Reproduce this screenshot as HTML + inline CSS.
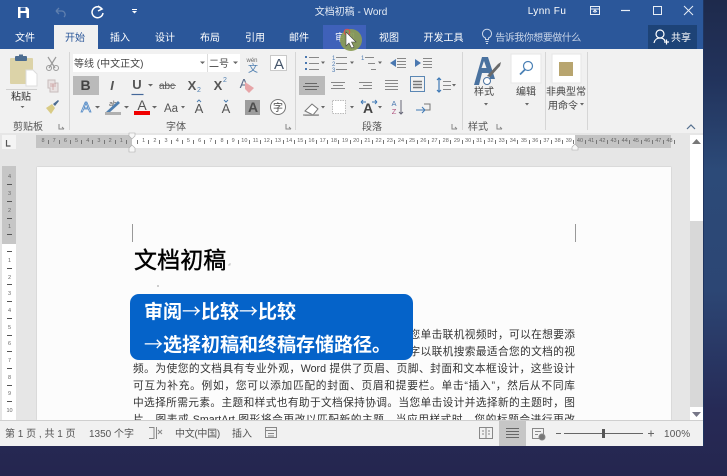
<!DOCTYPE html>
<html><head><meta charset="utf-8"><style>
html,body{margin:0;padding:0;width:727px;height:476px;overflow:hidden;background:#25264f}
body{position:relative;font-family:"Liberation Sans","Noto Sans CJK SC",sans-serif}
.a{position:absolute}
#bg{left:0;top:0;width:727px;height:476px;background:linear-gradient(180deg,#1e2a4c 0,#22335c 80px,#2c4a78 170px,#2c4674 290px,#262a56 410px,#25264f 476px)}
#win{left:0;top:0;width:704px;height:446px;background:#f1f1f1;overflow:hidden;border-right:1px solid #1f3560;box-sizing:border-box}
#title{left:0;top:0;width:704px;height:49px;background:#2b579a}
#doc{left:0;top:133px;width:704px;height:287px;background:#e6e6e6}
#page{left:37px;top:167px;width:634px;height:253px;background:#fcfcfc;box-shadow:0 0 1px #aaa;overflow:hidden}
.l{position:absolute;left:96px;width:442px;height:17px;line-height:17px;font-size:10.7px;color:#333;white-space:nowrap;text-align:justify;text-align-last:justify}
#rul{left:37.4px;top:136px;width:650px;height:11px;white-space:nowrap;font:5.5px/11px "Liberation Sans",sans-serif;color:#666;display:flex}
#rul span{width:11.2px;flex:none;text-align:center;background:linear-gradient(#777,#777) 100% 50%/1px 4px no-repeat}
#box{left:130px;top:294px;width:283px;height:66px;background:#0563c9;border-radius:9px}
.bt{position:absolute;left:14px;color:#fff;font-size:19px;font-weight:bold;line-height:24px;white-space:nowrap;font-family:"Noto Sans CJK SC","Liberation Sans",sans-serif}
.bt i{font-style:normal;font-weight:normal;display:inline-block;width:19px;text-align:center;overflow:visible}
text{font-family:"Liberation Sans","Noto Sans CJK SC",sans-serif}
</style></head><body>
<div class="a" id="bg"></div>
<div class="a" id="win">
<div class="a" id="title"></div>
<div class="a" id="doc"></div>
<div class="a" style="left:36px;top:135px;width:96px;height:13px;background:#c4c4c4"></div>
<div class="a" style="left:132px;top:135px;width:443px;height:13px;background:#fff"></div>
<div class="a" style="left:575px;top:135px;width:96px;height:13px;background:#c4c4c4"></div>
<div class="a" id="rul"><span>8</span><span>7</span><span>6</span><span>5</span><span>4</span><span>3</span><span>2</span><span>1</span><span></span><span>1</span><span>2</span><span>3</span><span>4</span><span>5</span><span>6</span><span>7</span><span>8</span><span>9</span><span>10</span><span>11</span><span>12</span><span>13</span><span>14</span><span>15</span><span>16</span><span>17</span><span>18</span><span>19</span><span>20</span><span>21</span><span>22</span><span>23</span><span>24</span><span>25</span><span>26</span><span>27</span><span>28</span><span>29</span><span>30</span><span>31</span><span>32</span><span>33</span><span>34</span><span>35</span><span>36</span><span>37</span><span>38</span><span>39</span><span>40</span><span>41</span><span>42</span><span>43</span><span>44</span><span>45</span><span>46</span><span>47</span><span>48</span></div>
<div class="a" style="left:2px;top:135px;width:14px;height:14px;background:#f4f4f4"></div>
<div class="a" style="left:2px;top:166px;width:14px;height:78px;background:#c6c6c6"></div>
<div class="a" style="left:2px;top:244px;width:14px;height:176px;background:#fff"></div>
<div class="a" style="left:690px;top:135px;width:13px;height:285px;background:#d8d8d8"></div>
<div class="a" style="left:690px;top:135px;width:13px;height:86px;background:#fff"></div>
<div class="a" style="left:690px;top:407px;width:13px;height:13px;background:#fff"></div>
<div class="a" id="page">
<div class="l" style="top:160px">视频提供了一种功能强大的方法帮助您证明您的观点。当您单击联机视频时，可以在想要添</div>
<div class="l" style="top:177px">加的视频的嵌入代码中进行粘贴。您也可以键入一个关键字以联机搜索最适合您的文档的视</div>
<div class="l" style="top:194px">频。为使您的文档具有专业外观，Word 提供了页眉、页脚、封面和文本框设计，这些设计</div>
<div class="l" style="top:211px">可互为补充。例如，您可以添加匹配的封面、页眉和提要栏。单击“插入”，然后从不同库</div>
<div class="l" style="top:228px">中选择所需元素。主题和样式也有助于文档保持协调。当您单击设计并选择新的主题时，图</div>
<div class="l" style="top:245px">片、图表或 SmartArt 图形将会更改以匹配新的主题。当应用样式时，您的标题会进行更改</div>
<div class="a" style="left:97px;top:77px;font-size:23px;line-height:32px;color:#000;-webkit-text-stroke:.4px #000;letter-spacing:.1px;white-space:nowrap">文档初稿</div>
</div>
<div class="a" id="box">
<div class="bt" style="top:5px">审阅<i>→</i>比较<i>→</i>比较</div>
<div class="bt" style="top:38px"><i>→</i>选择初稿和终稿存储路径。</div>
</div>
</div>
<svg class="a" style="left:0;top:0" width="727" height="476" viewBox="0 0 727 476">
<!-- tabs -->
<rect x="54" y="25" width="44" height="24" fill="#f1f1f1"/>
<rect x="323" y="25" width="43" height="24" fill="#3f61b9"/>
<rect x="648" y="25" width="49" height="24" fill="#1d4377"/>
<g font-size="10" fill="#fff" text-anchor="middle">
<text x="351" y="15" fill="#e6ecf5">文档初稿 - Word</text>
<text x="25" y="41">文件</text>
<text x="75" y="41" fill="#2b579a">开始</text>
<text x="120" y="41">插入</text>
<text x="165" y="41">设计</text>
<text x="210" y="41">布局</text>
<text x="255" y="41">引用</text>
<text x="299" y="41">邮件</text>
<text x="345" y="41">审阅</text>
<text x="389" y="41">视图</text>
<text x="443.500" y="41">开发工具</text>
<text x="538" y="41" fill="#c9d5e8" letter-spacing="-.5">告诉我你想要做什么</text>
<text x="681" y="41">共享</text>
<text x="547" y="14" font-size="10" letter-spacing=".4">Lynn Fu</text>
</g>
<!-- qat -->
<path d="M18 7h9l2 2v9H18z" fill="#fff"/><rect x="20.500" y="7.500" width="5" height="3.500" fill="#2b579a"/><rect x="20.500" y="13" width="6" height="5" fill="#2b579a"/>
<path d="M56 11l3-3M56 11l3 3M56 11h6a3.500 3.500 0 0 1 2 6" stroke="#5f7fae" stroke-width="1.300" fill="none"/>
<path d="M102 9a5.500 5.500 0 1 0 1 4M98 6l4 3-4 2" stroke="#fff" stroke-width="1.500" fill="none"/>
<path d="M132 11h5l-2.500 2.500z" fill="#fff"/><rect x="132" y="9" width="5" height="1" fill="#fff"/>
<!-- window controls -->
<g stroke="#e8eef6" fill="none" stroke-width="1"><rect x="590.500" y="6.500" width="9" height="8"/><path d="M590 9h10M595 13v-3M593 12l2-2 2 2"/><path d="M621 10.500h9" stroke-width="1.200"/><rect x="653.500" y="6.500" width="8" height="8"/><path d="M684 6l9 9M693 6l-9 9"/></g>
<path d="M485.500 39.500v-1.500a4.500 4.500 0 1 1 3 0v1.500zM485.500 41.500h3M486 43.500h2" fill="none" stroke="#c9d5e8"/>
<circle cx="660" cy="34" r="4" fill="none" stroke="#fff" stroke-width="1.200"/><path d="M654 43c1-4 3-5 6-5 2 0 4 .5 5 3M664 42h5M666.500 39.500v5" fill="none" stroke="#fff" stroke-width="1.200"/>
<!-- cursor -->
<circle cx="351" cy="40" r="11" fill="#8b9c55" opacity=".92"/>
<circle cx="347" cy="32" r="2.800" fill="none" stroke="#e2504c" stroke-width="1"/>
<path d="M346 32v14l3-3 2.500 5 2.500-1-2.500-5h4.500z" fill="#fff" stroke="#444" stroke-width=".6"/>
<!-- ribbon separators -->
<g stroke="#d6d6d6"><path d="M69.500 52v78M295.500 52v78M462.500 52v78M545.500 52v78M587.500 52v78"/><path d="M6 89.500h31" stroke="#cfcfcf"/></g>
<!-- clipboard -->
<rect x="10" y="58" width="23" height="26" rx="1" fill="#dcd3a8"/>
<rect x="15" y="56" width="12" height="5" rx="1" fill="#4c6c90"/><rect x="19" y="54.500" width="4" height="3" fill="#4c6c90"/>
<path d="M26 70h7l4 4v12H26z" fill="#fff" stroke="#ddd"/>
<path d="M48 57l7 11M56 57l-7 11" stroke="#9a9a9a" fill="none" stroke-width="1.200"/><circle cx="49" cy="68" r="2.500" fill="none" stroke="#9a9a9a"/><circle cx="56" cy="68" r="2.500" fill="none" stroke="#9a9a9a"/>
<path d="M48 80h7v3h3v9h-8v-4h-2z" fill="#e9e2e2" stroke="#c7bcbc"/><path d="M50 86h6M50 84h6M53 84v6" stroke="#c99a9a" stroke-width=".7"/>
<path d="M46 108l6-4 3 4-4 6z" fill="#d9cb85"/><path d="M53 104l5-4 1 1-4 5z" fill="#4c6c90"/>
<!-- ribbon text -->
<g font-size="10" fill="#444" text-anchor="middle">
<text x="21" y="100" fill="#333">粘贴</text>
<text x="28" y="130" fill="#555">剪贴板</text>
<text x="176" y="130" fill="#555">字体</text>
<text x="372" y="130" fill="#555">段落</text>
<text x="478" y="130" fill="#555">样式</text>
<text x="484" y="95">样式</text>
<text x="526" y="95">编辑</text>
<text x="566" y="95">非典型常</text>
<text x="563" y="109">用命令</text>
</g>
<!-- font box -->
<rect x="73" y="54" width="167" height="18" fill="#fff"/>
<path d="M207.500 54v18" stroke="#dcdcdc"/>
<text x="74" y="67" font-size="10" fill="#444">等线 (中文正文)</text>
<text x="209" y="67" font-size="10" fill="#444">二号</text>
<text x="252" y="62" font-size="6" fill="#666" text-anchor="middle">wén</text>
<text x="253" y="72" font-size="10" fill="#4f7fb0" text-anchor="middle">文</text>
<rect x="270.500" y="55.500" width="16" height="15" fill="#fff" stroke="#c9c9c9"/>
<text x="279" y="69" font-size="15" fill="#44546a" text-anchor="middle">A</text>
<rect x="73" y="76" width="26" height="19" fill="#bababa"/>
<rect x="299" y="76" width="26" height="19" fill="#bababa"/>
<g fill="#555" text-anchor="middle" font-size="13">
<text x="85.500" y="90" font-weight="bold" font-size="14" fill="#444">B</text>
<text x="112" y="90" font-style="italic" font-weight="bold" font-family="Liberation Serif">I</text>
<text x="137" y="89" font-weight="bold">U</text>
<text x="167" y="89" font-size="10">abc</text>
<text x="192" y="90" font-weight="bold">X</text><text x="199" y="92" font-size="7" fill="#4f7fb0">2</text>
<text x="218" y="90" font-weight="bold">X</text><text x="225" y="82" font-size="7" fill="#4f7fb0">2</text>
<text x="244" y="88" fill="#5a6a88" font-size="13">A</text>
<text x="86" y="112" fill="none" stroke="#4f88c6" stroke-width=".8" font-size="15">A</text>
<text x="142" y="110" font-size="14" fill="#555">A</text>
<text x="171" y="112" font-size="11.500">Aa</text>
<text x="199" y="113" font-size="13">A</text><text x="226" y="113" font-size="13">A</text>
</g>
<path d="M131.500 94.500h12" stroke="#44689a" stroke-width="1.200"/>
<path d="M159 85.500h17" stroke="#555" stroke-width=".8"/>
<path d="M245 82l9 6-5 5-4-4z" fill="#e7a5a8"/>
<rect x="134" y="111" width="16" height="4" fill="#f00000"/>
<rect x="245" y="100" width="15" height="15" fill="#9d9d9d"/>
<text x="253" y="112" font-size="14" font-weight="bold" fill="#4d4d4d" text-anchor="middle">A</text>
<circle cx="278" cy="107" r="7.500" fill="#fff" stroke="#777"/>
<text x="278" y="111" font-size="10" fill="#444" text-anchor="middle">字</text>
<text x="113" y="106" font-size="7" fill="#555" text-anchor="middle">ab</text>
<path d="M106 112l12-11 2 2-11 10z" fill="#4f7fb0"/><rect x="105" y="112" width="16" height="3" fill="#b0b0b0"/>
<path d="M197 102l2-2 2 2M224 100l2 2 2-2" fill="none" stroke="#4f7fb0"/>
<!-- paragraph icons -->
<g stroke="#888" stroke-width="1" fill="none">
<path d="M309 57.500h10M309 63.500h10M309 69.500h10"/>
<path d="M336 57.500h11M336 63.500h11M336 69.500h11"/>
<path d="M365 57.500h9M368 63.500h7M371 69.500h5"/>
<path d="M397 58.500h9M397 61.500h9M397 64.500h9M397 67.500h9"/>
<path d="M423 58.500h9M423 61.500h9M423 64.500h9M423 67.500h9"/>
<path d="M305 83.500h12M303 86.500h16M305 89.500h12" stroke="#666"/>
<path d="M331 82.500h14M333 85.500h10M331 88.500h14"/>
<path d="M359 82.500h13M363 85.500h9M359 88.500h13"/>
<path d="M385 80.500h13M385 83.500h13M385 86.500h13M385 89.500h13"/>
<rect x="410.500" y="76.500" width="14" height="15" stroke="#5b87b4"/>
<path d="M413 81.500h9M413 84.500h9M413 87.500h9" stroke="#777" stroke-width="1.400"/>
<path d="M443 81.500h8M443 85.500h8M443 89.500h8"/>
<path d="M439 78v14M437 80l2-2 2 2M437 90l2 2 2-2" stroke="#3f79b5" stroke-width="1.200"/>
<rect x="332.500" y="100.500" width="13" height="13" stroke="#bbb" fill="#fff" stroke-dasharray="1.500 1"/>
<path d="M304.500 115.500h14" stroke="#9a9a9a"/>
</g>
<g fill="#4a78b0">
<rect x="305" y="56" width="2" height="2"/><rect x="305" y="62" width="2" height="2"/><rect x="305" y="68" width="2" height="2"/>
<path d="M390 63l6-4v8z"/><path d="M421 63l-6-4v8z"/>
</g>
<g font-size="6" fill="#4a78b0"><text x="332" y="60">1</text><text x="332" y="66">2</text><text x="332" y="72">3</text><text x="361" y="60">1</text></g>
<path d="M305 111l7-7 6 5-5 6z" fill="#fff" stroke="#777"/><path d="M303 115h16" stroke="#999" stroke-width="1.400"/>
<text x="368" y="113" font-size="14" font-weight="bold" fill="#444" text-anchor="middle">A</text>
<path d="M361 102h5M372 102h5M361 102l2-2M361 102l2 2M377 102l-2-2M377 102l-2 2" stroke="#3f79b5" fill="none"/>
<text x="394" y="106" font-size="7.500" fill="#4a78b0" text-anchor="middle">A</text><text x="394" y="114" font-size="7.500" fill="#b0537f" text-anchor="middle">Z</text>
<path d="M401 100v14M399 112l2 2 2-2" stroke="#667" fill="none"/>
<path d="M416 110h9M422 107l3 3-3 3" stroke="#3f79b5" fill="none"/><path d="M424 104h6v6h-5" stroke="#777" fill="none"/>
<!-- styles -->
<path d="M474 85l8-28h6l7 22h-5l-1.500-6h-6.500l-3 12zM481.500 68h5l-2.500-7z" fill="#4a729f" fill-rule="evenodd"/>
<path d="M487 76l11-12 3-2-1 4-10 11z" fill="#6a6a6a"/><circle cx="487" cy="81" r="3.500" fill="#fff" stroke="#4a729f"/>
<rect x="511" y="54" width="30" height="29" fill="#fff" stroke="#e6e6e6"/>
<circle cx="528" cy="66" r="4.500" fill="none" stroke="#4a80b5" stroke-width="1.200"/><path d="M525 69.500l-5 5" stroke="#4a80b5" stroke-width="1.800"/>
<rect x="552" y="54" width="29" height="29" fill="#fff" stroke="#e6e6e6"/>
<rect x="559" y="62" width="14" height="14" fill="#b8a56f"/>
<!-- small dropdowns -->
<g fill="#666">
<path d="M20.500 106h4l-2 2z"/>
<path d="M200 61.500h5l-2.500 2.500zM233 61.500h5l-2.500 2.500zM148 84h5l-2.500 2.500zM95 106h5l-2.500 2.500zM124 106h5l-2.500 2.500zM152 106h5l-2.500 2.500zM181 106h4l-2 2.500zM321 61.500h4l-2 2.500zM350 61.500h4l-2 2.500zM378 61.500h4l-2 2.500zM452 84h4l-2 2.500zM321 106h4l-2 2.500zM350 106h4l-2 2.500zM378 106h4l-2 2.500zM484 103h4l-2 2.500zM525 103h4l-2 2.500zM580 103h4l-2 2.500z"/>
</g>
<g stroke="#888" fill="none"><path d="M59 124v5h5M62 127l2 2M286 124v5h5M289 127l2 2M452 124v5h5M455 127l2 2M497 124v5h5M500 127l2 2"/><path d="M687 129l4-4 4 4" stroke="#55708f" stroke-width="1.200"/></g>
<!-- ruler bits -->
<path d="M6.500 140v6h4" stroke="#555" fill="none" stroke-width="1.200"/>
<path d="M129 133h6v3l-3 3-3-3zM129 148l3-3 3 3v4h-6z" fill="#f7f7f7" stroke="#aaa" stroke-width=".6"/>
<path d="M572 147l3-3 3 3v3h-6z" fill="#f7f7f7" stroke="#aaa" stroke-width=".6"/>
<path d="M692 144l4.500-5 4.500 5z" fill="#777"/><path d="M692 412l4.500 5 4.500-5z" fill="#778"/>
<!-- vertical ruler -->
<g stroke="#555"><path d="M7 184.500h5M7 201.500h5M7 218.500h5M7 234.500h5M7 251.500h5M7 268.500h5M7 284.500h5M7 301.500h5M7 318.500h5M7 335.500h5M7 351.500h5M7 368.500h5M7 385.500h5M7 401.500h5"/></g>
<g font-size="5.500" fill="#666" text-anchor="middle"><text x="9.500" y="178">4</text><text x="9.500" y="195">3</text><text x="9.500" y="212">2</text><text x="9.500" y="228">1</text><text x="9.500" y="262">1</text><text x="9.500" y="279">2</text><text x="9.500" y="295">3</text><text x="9.500" y="312">4</text><text x="9.500" y="329">5</text><text x="9.500" y="345">6</text><text x="9.500" y="362">7</text><text x="9.500" y="379">8</text><text x="9.500" y="395">9</text><text x="9.500" y="412">10</text></g>
<!-- page marks -->
<path d="M132.500 224v18M575.500 224v18" stroke="#999"/>
<path d="M230 263v2h-2" stroke="#aaa" fill="none" stroke-width=".7"/><path d="M158 285v2" stroke="#888" stroke-width=".8"/>
<!-- status -->
<rect x="0" y="420" width="703" height="1" fill="#cfcfcf"/>
<rect x="499" y="421" width="27" height="25" fill="#c6c6c6"/>
<g font-size="10" fill="#555">
<text x="5" y="437">第 1 页 , 共 1 页</text>
<text x="89" y="437">1350 个字</text>
<text x="175" y="437" letter-spacing="-.3">中文(中国)</text>
<text x="232" y="437">插入</text>
<text x="664" y="437" letter-spacing=".2">100%</text>
</g>
<g fill="none" stroke="#888">
<path d="M149 427.500h5v11h-5M158 430l4 4M162 430l-4 4M156.500 427v12"/>
<rect x="265.500" y="427.500" width="11" height="10"/><path d="M265 430.500h11M268 433.500h6M268 436h6"/>
<path d="M479.500 427.500h13v11h-13zM486 427v12M482 431h2M482 434h2M488 431h2M488 434h2"/>
<path d="M506 428.500h13M506 431.500h13M506 434.500h13M506 437.500h13" stroke="#666"/>
<path d="M532.500 428.500h11v10h-11zM535 431.500h6M535 434.500h3"/><circle cx="542" cy="437" r="3" fill="#777"/>
<path d="M556 433.500h5M564 433.500h79M648 433.500h6M651 430.500v6" stroke="#666"/>
</g>
<rect x="602" y="429" width="3" height="9" fill="#555"/>
</svg>
</body></html>
